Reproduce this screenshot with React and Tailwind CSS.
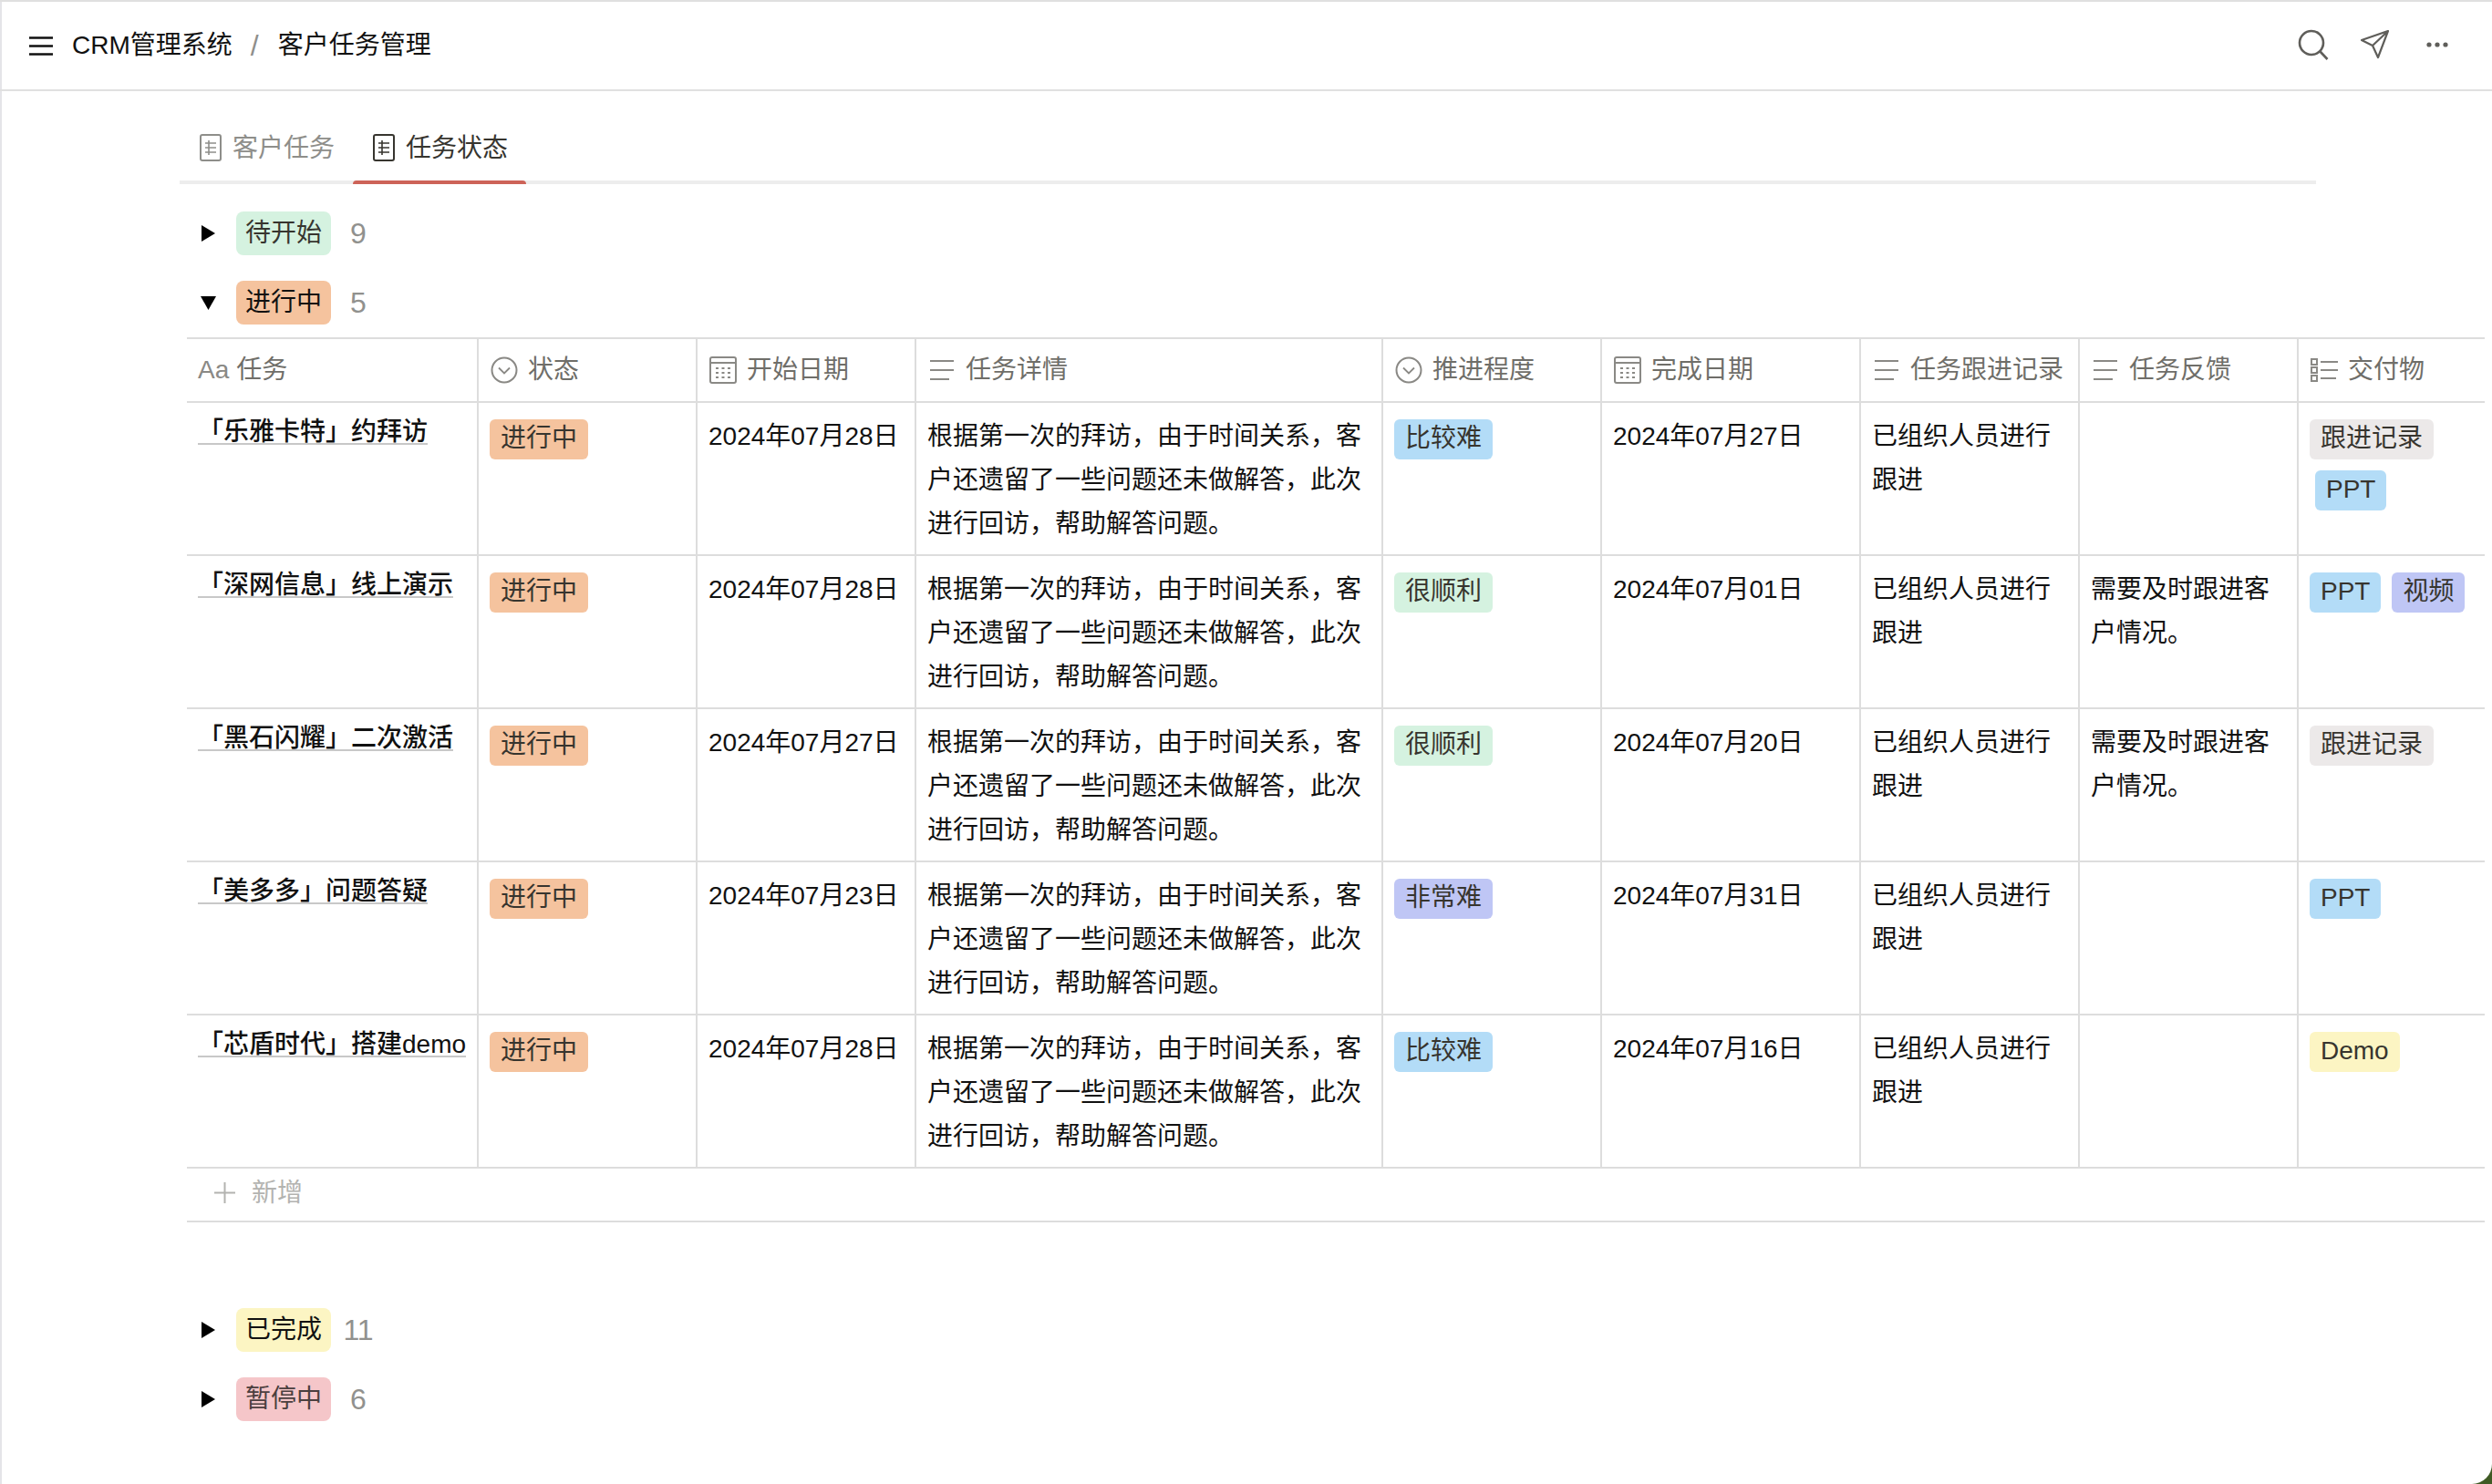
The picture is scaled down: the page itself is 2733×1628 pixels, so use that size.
import React from "react";

const columns = "grid grid-cols-[320px_240px_240px_512px_240px_284px_240px_240px_204px]";
const detail = "根据第一次的拜访，由于时间关系，客户还遗留了一些问题还未做解答，此次进行回访，帮助解答问题。";
const follow = "已组织人员进行跟进";
const feedback = "需要及时跟进客户情况。";

const colors = {
    ppt: "bg-[#b3dcf7]",
    video: "bg-[#bfc6f5]",
    record: "bg-[#ece9e9]",
    demo: "bg-[#fcf5c3]",
    easy: "bg-[#d5f2e0]",
    mid: "bg-[#b3dcf7]",
    hard: "bg-[#bfc6f5]",
    doing: "bg-[#f5c39e]",
};

const rows = [
    { name: "「乐雅卡特」约拜访", start: "2024年07月28日", level: ["比较难", "mid"], end: "2024年07月27日", feedback: "", items: [["跟进记录", "record"], ["PPT", "ppt", true]] },
    { name: "「深网信息」线上演示", start: "2024年07月28日", level: ["很顺利", "easy"], end: "2024年07月01日", feedback, items: [["PPT", "ppt"], ["视频", "video"]] },
    { name: "「黑石闪耀」二次激活", start: "2024年07月27日", level: ["很顺利", "easy"], end: "2024年07月20日", feedback, items: [["跟进记录", "record"]] },
    { name: "「美多多」问题答疑", start: "2024年07月23日", level: ["非常难", "hard"], end: "2024年07月31日", feedback: "", items: [["PPT", "ppt"]] },
    { name: "「芯盾时代」搭建demo", start: "2024年07月28日", level: ["比较难", "mid"], end: "2024年07月16日", feedback: "", items: [["Demo", "demo"]] },
];

function DocIcon({ active }) {
    const c = active ? "#37352f" : "#8e8e8a";
    return (
        <svg width="24" height="30" viewBox="0 0 24 30" fill="none" stroke={c} strokeWidth="2">
            <rect x="1" y="1" width="22" height="28" rx="2" />
            <path d="M6 10H18M6 15H18M6 20H18M10 7V23" strokeWidth="1.6" />
        </svg>
    );
}

function ChevronCircle() {
    return (
        <svg width="30" height="30" viewBox="0 0 30 30" fill="none" stroke="#8a8985" strokeWidth="2">
            <circle cx="15" cy="15" r="13.5" />
            <path d="M9 12.5L15 18.5L21 12.5" strokeWidth="1.8" />
        </svg>
    );
}

function CalendarIcon() {
    return (
        <svg width="30" height="30" viewBox="0 0 30 30" fill="none" stroke="#8a8985" strokeWidth="2">
            <rect x="1" y="1" width="28" height="28" rx="2" />
            <path d="M1 7H29" />
            <path d="M7 13H10M13.5 13H16.5M20 13H23M7 18H10M13.5 18H16.5M20 18H23M7 23H10M13.5 23H16.5M20 23H23" strokeWidth="2" />
        </svg>
    );
}

function ListIcon() {
    return (
        <svg width="26" height="24" viewBox="0 0 26 24" fill="none" stroke="#8a8985" strokeWidth="2">
            <path d="M0 2H26M0 12H26M0 22H21" />
        </svg>
    );
}

function MultiIcon() {
    return (
        <svg width="30" height="26" viewBox="0 0 30 26" fill="none" stroke="#8a8985" strokeWidth="2">
            <rect x="1" y="1" width="6" height="6" />
            <rect x="1" y="10" width="6" height="6" />
            <rect x="1" y="19" width="6" height="6" />
            <path d="M11 4H30M11 13H30M11 22H28" />
        </svg>
    );
}

function Tag({ label, color, indent }) {
    return (
        <span className={`h-[44px] rounded-[6px] px-3 leading-[42px] text-[#37352f] ${colors[color]} ${indent ? "ml-[6px]" : ""}`}>
            {label}
        </span>
    );
}

function HeadCell({ icon, label, last }) {
    return (
        <div className={`flex items-center pl-3 text-[#6f6e69] ${last ? "" : "border-r-2 border-[#dddddd]"}`}>
            <span className="mr-[10px] flex w-[32px] justify-center">{icon}</span>
            {label}
        </div>
    );
}

function Group({ open, label, bg, text, count, className }) {
    return (
        <div className={`flex h-[48px] items-center pl-[24px] ${className}`}>
            <span className="flex w-[38px] items-center">
                {open ? (
                    <svg width="17" height="15" viewBox="0 0 17 15" className="-ml-px"><path d="M0 0H17L8.5 15Z" fill="#000" /></svg>
                ) : (
                    <svg width="15" height="18" viewBox="0 0 15 18"><path d="M0 0L15 9L0 18Z" fill="#000" /></svg>
                )}
            </span>
            <span className={`h-[48px] rounded-[8px] px-[10px] leading-[48px] ${bg} ${text}`}>{label}</span>
            <span className="ml-[10px] w-[40px] text-center text-[32px] text-[#91918e]">{count}</span>
        </div>
    );
}

export default function App() {
    return (
        <div className="h-[1628px] w-[2733px] overflow-hidden bg-[#3f5a24] font-['Liberation_Sans','Noto_Sans_CJK_SC',sans-serif] text-[28px] text-[#111111]">
            <div className="h-full rounded-br-[22px] border-l-2 border-[#e4e4e8] bg-white">
                {/* top bar */}
                <div className="-ml-[2px] flex h-[100px] items-center border-t-2 border-b-2 border-[#e0e0e0] pl-[32px] pr-[48px]">
                    <svg width="26" height="21" viewBox="0 0 26 21" fill="none" stroke="#111" strokeWidth="2.4">
                        <path d="M0 1.5H26M0 10.5H26M0 19.5H26" />
                    </svg>
                    <span className="ml-[21px]">CRM管理系统</span>
                    <span className="ml-[20px] mr-[21px] text-[32px] text-[#8f8f8c]">/</span>
                    <span>客户任务管理</span>
                    <div className="ml-auto flex items-center pb-[2px]">
                        <svg width="34" height="34" viewBox="0 0 34 34" fill="none" stroke="#5f5e5a" strokeWidth="2.6">
                            <circle cx="15" cy="15" r="13" />
                            <path d="M24.5 24.5L32.5 33" />
                        </svg>
                        <svg width="31" height="32" viewBox="0 0 31 32" fill="none" stroke="#5f5e5a" strokeWidth="2.2" strokeLinejoin="round" className="ml-[35px]">
                            <path d="M30 1L1 11L13 17L19 30ZM30 1L13 17" />
                        </svg>
                        <svg width="24" height="6" viewBox="0 0 24 6" fill="#5f5e5a" className="ml-[41px]">
                            <circle cx="3" cy="3" r="2.6" />
                            <circle cx="12" cy="3" r="2.6" />
                            <circle cx="21" cy="3" r="2.6" />
                        </svg>
                    </div>
                </div>

                <div className="pl-[195px]">
                    {/* tabs */}
                    <div className="flex h-[102px] w-[2343px] border-b-4 border-[#ededed] pt-[26px]">
                        <div className="flex h-[72px] items-center pl-[22px] pr-[20px] text-[#8e8e8a]">
                            <DocIcon />
                            <span className="ml-[12px] pt-[1px]">客户任务</span>
                        </div>
                        <div className="relative flex h-[72px] items-center pl-[22px] pr-[20px] text-[#37352f]">
                            <DocIcon active />
                            <span className="ml-[12px] pt-[1px]">任务状态</span>
                            <span className="absolute -bottom-[4px] left-0 h-[4px] w-full rounded-t-[4px] bg-[#cd6358]" />
                        </div>
                    </div>

                    <Group label="待开始" bg="bg-[#d5f2e0]" text="text-[#37352f]" count="9" className="mt-[30px]" />
                    <Group open label="进行中" bg="bg-[#f5c39e]" text="text-[#111111]" count="5" className="mt-[28px]" />

                    {/* table */}
                    <div className="ml-2 mt-[14px] w-[2520px] border-t-2 border-[#dddddd]">
                        <div className={`${columns} h-[70px] border-b-2 border-[#dddddd]`}>
                            <div className="flex items-center border-r-2 border-[#dddddd] pl-3 text-[#6f6e69]">
                                <span className="mr-[8px] text-[#8a8985]">Aa</span>任务
                            </div>
                            <HeadCell icon={<ChevronCircle />} label="状态" />
                            <HeadCell icon={<CalendarIcon />} label="开始日期" />
                            <HeadCell icon={<ListIcon />} label="任务详情" />
                            <HeadCell icon={<ChevronCircle />} label="推进程度" />
                            <HeadCell icon={<CalendarIcon />} label="完成日期" />
                            <HeadCell icon={<ListIcon />} label="任务跟进记录" />
                            <HeadCell icon={<ListIcon />} label="任务反馈" />
                            <HeadCell icon={<MultiIcon />} label="交付物" last />
                        </div>

                        {rows.map((row, index) => (
                            <div key={index} className={`${columns} h-[168px] border-b-2 border-[#dddddd] leading-[48px]`}>
                                <div className="border-r-2 border-[#dddddd] pl-3">
                                    <span className="mt-[20px] inline-block whitespace-nowrap border-b-2 border-[#c8c8c8] font-medium leading-[24px]">{row.name}</span>
                                </div>
                                <div className="flex items-start border-r-2 border-[#dddddd] pl-3 pt-[18px]">
                                    <Tag label="进行中" color="doing" />
                                </div>
                                <div className="border-r-2 border-[#dddddd] px-3 pt-[13px]">{row.start}</div>
                                <div className="border-r-2 border-[#dddddd] px-3 pt-[13px]">{detail}</div>
                                <div className="flex items-start border-r-2 border-[#dddddd] pl-3 pt-[18px]">
                                    <Tag label={row.level[0]} color={row.level[1]} />
                                </div>
                                <div className="border-r-2 border-[#dddddd] px-3 pt-[13px]">{row.end}</div>
                                <div className="border-r-2 border-[#dddddd] px-3 pt-[13px]">{follow}</div>
                                <div className="border-r-2 border-[#dddddd] px-3 pt-[13px]">{row.feedback}</div>
                                <div className="flex flex-wrap content-start gap-3 pl-3 pt-[18px]">
                                    {row.items.map((item) => (
                                        <Tag key={item[0]} label={item[0]} color={item[1]} indent={item[2]} />
                                    ))}
                                </div>
                            </div>
                        ))}

                        <div className="flex h-[59px] w-[2520px] items-center border-b-2 border-[#dddddd] pb-[4px] pl-[30px] text-[#b3b3b0]">
                            <svg width="23" height="23" viewBox="0 0 23 23" fill="none" stroke="#b3b3b0" strokeWidth="2">
                                <path d="M11.5 0V23M0 11.5H23" />
                            </svg>
                            <span className="ml-[18px]">新增</span>
                        </div>
                    </div>

                    <Group label="已完成" bg="bg-[#fcf5c3]" text="text-[#111111]" count="11" className="mt-[94px]" />
                    <Group label="暂停中" bg="bg-[#f5c6c9]" text="text-[#4b3f3f]" count="6" className="mt-[28px]" />
                </div>
            </div>
        </div>
    );
}
